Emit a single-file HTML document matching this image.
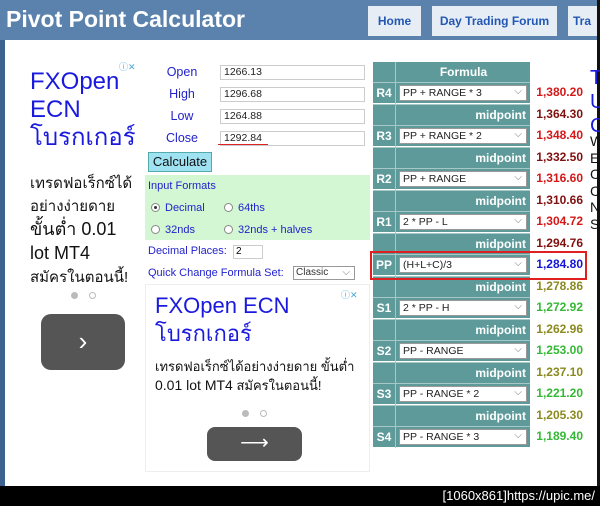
<!DOCTYPE html>
<html><head><meta charset="utf-8"><style>
*{margin:0;padding:0;box-sizing:border-box}
body{width:600px;height:506px;overflow:hidden;background:#fff;font-family:"Liberation Sans","Noto Sans CJK SC",sans-serif;position:relative}
.a{position:absolute}
.hdr{left:0;top:0;width:600px;height:40px;background:#5b82ad}
.tab{top:6px;height:30px;background:#e6edf5;color:#2257b4;font-weight:bold;font-size:12px;line-height:30px;text-align:center}
.lbl{left:146px;width:72px;text-align:center;color:#2222cc;font-size:12.5px}
.inp{left:220px;width:145px;height:15px;border:1px solid #ccc;font-size:10.5px;line-height:13px;padding-left:3px;color:#222}
.thai{font-family:"Liberation Sans","Noto Sans CJK SC","WenQuanYi Zen Hei",sans-serif}
.row{left:373px;width:157px;height:21px;background:#5e9a9a;border-top:1px solid #a8c8c8}
.k{position:absolute;left:0;width:23px;top:0;height:21px;border-right:1px solid #a8c8c8;color:#fff;font-weight:bold;font-size:12px;line-height:21px;text-align:center}
.sel{position:absolute;left:26px;top:2px;width:128px;height:16px;background:#fff;border:1px solid #999;font-size:10.5px;line-height:14px;padding-left:3px;color:#222}
.sel:after{content:"⌵";position:absolute;right:4px;top:-1px;color:#777;font-size:10px}
.mp{position:absolute;right:4px;top:0;color:#fff;font-weight:bold;font-size:12px;line-height:21px}
.v{left:530px;width:53px;text-align:right;font-weight:bold;font-size:12px;height:21px;line-height:21px}
.radio{display:inline-block;width:9px;height:9px;border:1px solid #888;border-radius:50%;margin-right:5px;vertical-align:-1px;background:#fff;position:relative}
</style></head><body>
<div class="a hdr"></div>
<div class="a" style="left:6px;top:6px;color:#fff;font-weight:bold;font-size:23px">Pivot Point Calculator</div>
<div class="a tab" style="left:368px;width:53px">Home</div>
<div class="a tab" style="left:432px;width:125px">Day Trading Forum</div>
<div class="a tab" style="left:568px;width:40px;text-align:left;padding-left:5px">Tra</div>
<div class="a" style="left:0;top:40px;width:5px;height:446px;background:#3d6290"></div>
<div class="a" style="left:597px;top:0;width:3px;height:506px;background:#111"></div>

<!-- left ad -->
<div class="a" style="left:119px;top:60px;font-size:9px;color:#4aa8d8">ⓘ✕</div>
<div class="a thai" style="left:30px;top:68px;color:#1a1adf;font-size:24px;line-height:28px">FXOpen<br>ECN<br>โบรกเกอร์</div>
<div class="a thai" style="left:30px;top:172px;color:#111;font-size:15px;line-height:23px">เทรดฟอเร็กซ์ได้<br>อย่างง่ายดาย<br><span style="font-size:18px">ขั้นต่ำ 0.01<br>lot MT4</span><br>สมัครในตอนนี้!</div>
<div class="a" style="left:71px;top:292px;width:7px;height:7px;border-radius:50%;background:#bbb"></div>
<div class="a" style="left:89px;top:292px;width:7px;height:7px;border-radius:50%;border:1px solid #bbb"></div>
<div class="a" style="left:41px;top:314px;width:84px;height:56px;border-radius:10px;background:#555;color:#fff;font-size:26px;text-align:center;line-height:54px">›</div>

<!-- form -->
<div class="a lbl" style="top:65px">Open</div><div class="a inp" style="top:65px">1266.13</div>
<div class="a lbl" style="top:87px">High</div><div class="a inp" style="top:87px">1296.68</div>
<div class="a lbl" style="top:109px">Low</div><div class="a inp" style="top:109px">1264.88</div>
<div class="a lbl" style="top:131px">Close</div><div class="a inp" style="top:131px">1292.84</div>
<div class="a" style="left:218px;top:144px;width:50px;height:1px;background:#d22"></div>
<div class="a" style="left:148px;top:152px;width:64px;height:20px;background:#9fe2f2;border:1px solid #5aa;font-size:13px;line-height:18px;text-align:center;color:#111">Calculate</div>
<div class="a" style="left:145px;top:175px;width:225px;height:65px;background:#d2f7d2"></div>
<div class="a" style="left:148px;top:180px;font-size:11px;color:#2222cc">Input Formats</div>
<div class="a" style="left:151px;top:202px;font-size:11px;color:#2222cc"><span class="radio"><span style="position:absolute;left:2px;top:2px;width:3px;height:3px;background:#333;border-radius:50%"></span></span>Decimal</div>
<div class="a" style="left:224px;top:202px;font-size:11px;color:#2222cc"><span class="radio"></span>64ths</div>
<div class="a" style="left:151px;top:224px;font-size:11px;color:#2222cc"><span class="radio"></span>32nds</div>
<div class="a" style="left:224px;top:224px;font-size:11px;color:#2222cc"><span class="radio"></span>32nds + halves</div>
<div class="a" style="left:148px;top:245px;font-size:11px;color:#2222cc">Decimal Places:</div>
<div class="a" style="left:233px;top:245px;width:30px;height:14px;border:1px solid #ccc;font-size:10px;padding-left:2px">2</div>
<div class="a" style="left:148px;top:267px;font-size:11px;color:#2222cc">Quick Change Formula Set:</div>
<div class="a" style="left:293px;top:266px;width:62px;height:14px;border:1px solid #999;font-size:10px;padding-left:2px;color:#333">Classic<span style="position:absolute;right:4px;color:#777">⌵</span></div>

<!-- second ad -->
<div class="a" style="left:145px;top:284px;width:225px;height:188px;border:1px solid #eee"></div>
<div class="a" style="left:341px;top:288px;font-size:9px;color:#4aa8d8">ⓘ✕</div>
<div class="a thai" style="left:155px;top:292px;color:#1a1adf;font-size:22px;line-height:28px">FXOpen ECN<br>โบรกเกอร์</div>
<div class="a thai" style="left:155px;top:357px;color:#111;font-size:13px;line-height:19px">เทรดฟอเร็กซ์ได้อย่างง่ายดาย ขั้นต่ำ<br><span style="font-size:14px">0.01 lot MT4</span> สมัครในตอนนี้!</div>
<div class="a" style="left:242px;top:410px;width:7px;height:7px;border-radius:50%;background:#bbb"></div>
<div class="a" style="left:260px;top:410px;width:7px;height:7px;border-radius:50%;border:1px solid #bbb"></div>
<div class="a" style="left:207px;top:427px;width:95px;height:34px;border-radius:8px;background:#555;color:#fff;font-size:20px;text-align:center;line-height:32px">⟶</div>

<!-- results -->
<div class="a" style="left:373px;top:62px;width:157px;height:20px;background:#5e9a9a"><div class="k" style="height:20px"></div><div style="position:absolute;left:24px;right:0;text-align:center;color:#fff;font-weight:bold;font-size:12px;line-height:20px">Formula</div></div>

<div class="a row" style="top:82px"><div class="k">R4</div><div class="sel">PP + RANGE * 3</div></div><div class="a v" style="top:82px;color:#d41818">1,380.20</div>
<div class="a row" style="top:103.5px"><div class="k"></div><div class="mp">midpoint</div></div><div class="a v" style="top:103.5px;color:#801010">1,364.30</div>
<div class="a row" style="top:125px"><div class="k">R3</div><div class="sel">PP + RANGE * 2</div></div><div class="a v" style="top:125px;color:#d41818">1,348.40</div>
<div class="a row" style="top:146.5px"><div class="k"></div><div class="mp">midpoint</div></div><div class="a v" style="top:146.5px;color:#801010">1,332.50</div>
<div class="a row" style="top:168px"><div class="k">R2</div><div class="sel">PP + RANGE</div></div><div class="a v" style="top:168px;color:#d41818">1,316.60</div>
<div class="a row" style="top:189.5px"><div class="k"></div><div class="mp">midpoint</div></div><div class="a v" style="top:189.5px;color:#801010">1,310.66</div>
<div class="a row" style="top:211px"><div class="k">R1</div><div class="sel">2 * PP - L</div></div><div class="a v" style="top:211px;color:#d41818">1,304.72</div>
<div class="a row" style="top:232.5px"><div class="k"></div><div class="mp">midpoint</div></div><div class="a v" style="top:232.5px;color:#801010">1,294.76</div>
<div class="a row" style="top:254px"><div class="k">PP</div><div class="sel">(H+L+C)/3</div></div><div class="a v" style="top:254px;color:#1515d8">1,284.80</div>
<div class="a row" style="top:275.5px"><div class="k"></div><div class="mp">midpoint</div></div><div class="a v" style="top:275.5px;color:#8a8a20">1,278.86</div>
<div class="a row" style="top:297px"><div class="k">S1</div><div class="sel">2 * PP - H</div></div><div class="a v" style="top:297px;color:#35b835">1,272.92</div>
<div class="a row" style="top:318.5px"><div class="k"></div><div class="mp">midpoint</div></div><div class="a v" style="top:318.5px;color:#8a8a20">1,262.96</div>
<div class="a row" style="top:340px"><div class="k">S2</div><div class="sel">PP - RANGE</div></div><div class="a v" style="top:340px;color:#35b835">1,253.00</div>
<div class="a row" style="top:361.5px"><div class="k"></div><div class="mp">midpoint</div></div><div class="a v" style="top:361.5px;color:#8a8a20">1,237.10</div>
<div class="a row" style="top:383px"><div class="k">S3</div><div class="sel">PP - RANGE * 2</div></div><div class="a v" style="top:383px;color:#35b835">1,221.20</div>
<div class="a row" style="top:404.5px"><div class="k"></div><div class="mp">midpoint</div></div><div class="a v" style="top:404.5px;color:#8a8a20">1,205.30</div>
<div class="a row" style="top:426px"><div class="k">S4</div><div class="sel">PP - RANGE * 3</div></div><div class="a v" style="top:426px;color:#35b835">1,189.40</div>
<div class="a" style="left:370px;top:251px;width:217px;height:29px;border:2px solid #e02020"></div>

<div class="a" style="left:590px;top:66px;color:#1a1adf;font-size:20px;line-height:24px">T<br>U<br>C</div>
<div class="a" style="left:590px;top:133px;color:#111;font-size:14px;line-height:16.5px">W<br>E<br>C<br>C<br>N<br>S</div>

<div class="a" style="left:0;top:486px;width:600px;height:20px;background:#000;color:#fff;font-size:13px;line-height:20px;text-align:right;padding-right:5px">[1060x861]https://upic.me/</div>
</body></html>
